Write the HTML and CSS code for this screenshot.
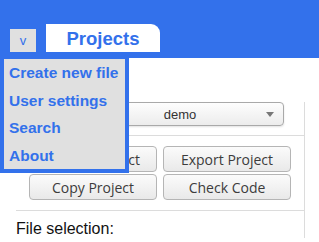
FILE: index.html
```html
<!DOCTYPE html>
<html lang="en">
<head>
  <meta charset="UTF-8">
  <title>Projects</title>
  <link rel="stylesheet" href="styles.css">
</head>
<body>
  <!-- Blue top bar with menu toggle and tab -->
  <div class="topbar">
    <div class="menu-toggle">v</div>
    <div class="tab">Projects</div>
  </div>

  <!-- Open dropdown menu -->
  <nav class="dropdown">
    <a href="#">Create new file</a>
    <a href="#">User settings</a>
    <a href="#">Search</a>
    <a href="#">About</a>
  </nav>

  <!-- Project panel -->
  <div class="panel">
    <div class="select-row">
      <div class="select">
        <span class="select-text">demo</span>
        <span class="select-arrow"></span>
      </div>
    </div>
    <div class="buttons">
      <button class="btn">Import Project</button>
      <button class="btn">Export Project</button>
      <button class="btn">Copy Project</button>
      <button class="btn">Check Code</button>
    </div>
    <div class="file-label">File selection:</div>
  </div>
</body>
</html>
```

FILE: styles.css
```css
/* Basic page setup */
body {
  margin: 0;
  font-family: "Liberation Sans", Arial, sans-serif;
  background: #fff;
  color: #111;
}

/* Blue header bar */
.topbar {
  height: 58px;
  background: #3371eb;
  display: flex;
  align-items: flex-end;
  padding-left: 10px;
  box-sizing: border-box;
}

.menu-toggle {
  width: 26px;
  height: 23px;
  margin-bottom: 6px;
  background: #e0e0e0;
  color: #3371eb;
  font-size: 13px;
  line-height: 23px;
  text-align: center;
}

.tab {
  width: 114px;
  height: 28px;
  margin-left: 10px;
  margin-bottom: 6px;
  background: #fff;
  border-radius: 0 9px 0 0;
  color: #3371eb;
  font-weight: bold;
  font-size: 18.5px;
  line-height: 30px;
  text-align: center;
}

/* Dropdown menu lies over the page */
.dropdown {
  position: absolute;
  top: 55px;
  left: 0;
  width: 121px;
  background: #e0e0e0;
  border: 4px solid #3371eb;
  display: flex;
  flex-direction: column;
  z-index: 10;
}

.dropdown a {
  color: #3371eb;
  font-weight: bold;
  font-size: 15.5px;
  line-height: 27.5px;
  padding-left: 5px;
  text-decoration: none;
  white-space: nowrap;
}

/* Panel with project controls */
.panel {
  margin: 44px 0 0 16px;
  width: 288px;
  border-right: 1px solid #dcdcdc;
}

.select-row {
  padding: 0 0 9px 60px;
  border-bottom: 1px solid #dcdcdc;
}

.select {
  width: 206px;
  height: 22px;
  border: 1px solid #a9a9a9;
  border-radius: 4px;
  background: linear-gradient(#fdfdfd, #ececec);
  box-shadow: 0 1px 2px rgba(0,0,0,0.12);
  display: flex;
  align-items: center;
  justify-content: center;
  position: relative;
  font-size: 13px;
  color: #333;
}

.select-arrow {
  position: absolute;
  right: 9px;
  top: 9px;
  border-left: 4px solid transparent;
  border-right: 4px solid transparent;
  border-top: 5px solid #777;
}

.buttons {
  display: grid;
  grid-template-columns: 128px 128px;
  gap: 2px 6px;
  padding: 10px 0 10px 13px;
  border-bottom: 1px solid #dcdcdc;
}

.btn {
  height: 26px;
  border: 1px solid #b5b5b5;
  border-radius: 4px;
  background: linear-gradient(#fbfbfb, #e9e9e9);
  font-family: "Open Sans", sans-serif;
  font-size: 14px;
  color: #3c3c3c;
  padding: 0;
}

.file-label {
  margin-top: 9px;
  font-size: 16px;
  color: #111;
}
```
